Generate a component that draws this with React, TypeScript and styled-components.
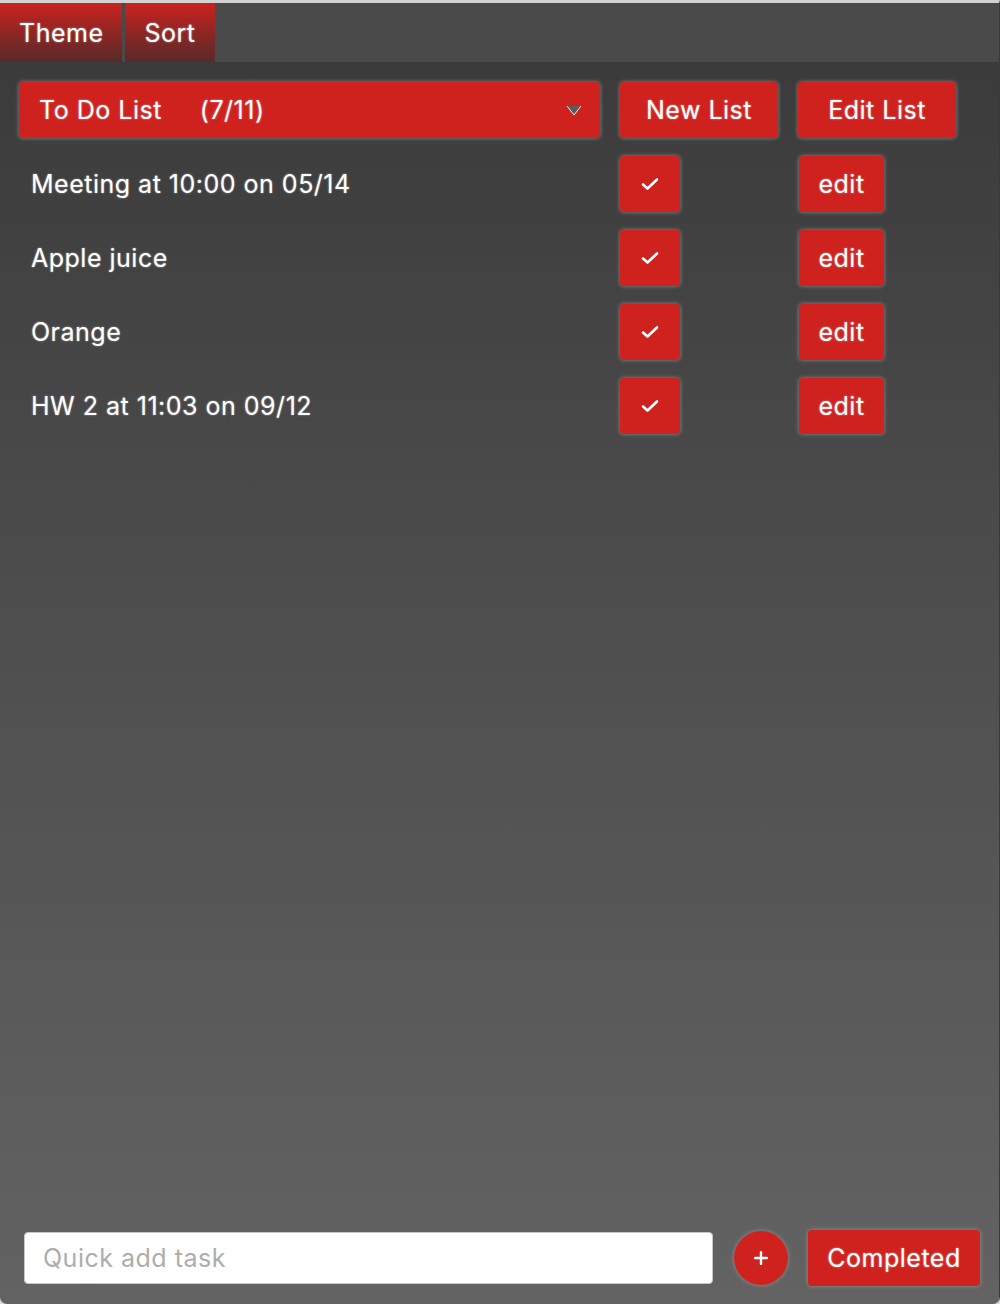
import React from "react";
import styled, { createGlobalStyle } from "styled-components";

const Global = createGlobalStyle`
  html, body { margin: 0; padding: 0; background: #d8d8d8; }
  body { font-family: "Inter", "Roboto", "Liberation Sans", sans-serif; }
  * { box-sizing: border-box; }
`;

const RED = "#cf221e";

const Window = styled.div`
  width: 1000px;
  height: 1304px;
  display: flex;
  flex-direction: column;
  border-top: 3px solid #d2d2d2;
  border-right: 1px solid #3a3a3a;
  border-radius: 0 0 7px 7px;
  overflow: hidden;
  font-size: 25px;
  letter-spacing: 0.5px;
`;

const TopBar = styled.div`
  height: 59px;
  background: #4a4a4a;
  display: flex;
  gap: 3px;
`;

const Tab = styled.div`
  height: 100%;
  padding: 0 19px;
  display: flex;
  align-items: center;
  color: #fff;
  text-shadow: 0 0 2px rgba(255, 255, 255, 0.6);
  background: linear-gradient(to bottom, #cc221e 0%, #8e2624 50%, #572b2a 100%);
`;

const Body = styled.div`
  flex: 1;
  display: flex;
  flex-direction: column;
  padding: 20px 0 18px 0;
  background: linear-gradient(to bottom, #3b3b3b 0%, #4c4c4c 40%, #636363 100%);
`;

const Grid = styled.div`
  display: grid;
  grid-template-columns: 581px 158px 158px;
  column-gap: 20px;
  row-gap: 18px;
  grid-auto-rows: 56px;
  padding-left: 19px;
  align-items: center;
  justify-items: start;
`;

const RedBox = styled.button`
  border: none;
  background: ${RED};
  color: #fff;
  border-radius: 4px;
  box-shadow: 0 0 4px rgba(170, 170, 170, 0.7);
  font-family: inherit;
  font-size: inherit;
  letter-spacing: inherit;
  text-shadow: 0 0 2px rgba(255, 255, 255, 0.55);
  display: flex;
  align-items: center;
  justify-content: center;
  padding: 0;
  height: 56px;
`;

const Select = styled(RedBox)`
  width: 581px;
  justify-content: space-between;
  padding: 0 18px 0 20px;
`;

const SelectLabel = styled.span`
  display: flex;
  gap: 38px;
`;

const WideButton = styled(RedBox)`
  width: 158px;
`;

const CheckButton = styled(RedBox)`
  width: 60px;
`;

const EditButton = styled(RedBox)`
  width: 85px;
  margin-left: 1px;
`;

const TaskText = styled.div`
  color: #fff;
  padding-left: 12px;
  text-shadow: 0 0 2px rgba(255, 255, 255, 0.55);
`;

const Spacer = styled.div`
  flex: 1;
`;

const Footer = styled.div`
  display: flex;
  align-items: center;
  padding-left: 24px;
`;

const Input = styled.input`
  width: 689px;
  height: 52px;
  border: 1px solid #c8c8c8;
  border-radius: 4px;
  background: #fff;
  padding: 0 18px;
  font-family: inherit;
  font-size: inherit;
  letter-spacing: inherit;
  color: #333;
  outline: none;
  &::placeholder { color: #adadad; }
`;

const RoundButton = styled(RedBox)`
  width: 54px;
  height: 54px;
  border-radius: 50%;
  margin-left: 21px;
`;

const CompletedButton = styled(RedBox)`
  width: 172px;
  margin-left: 20px;
`;

const Check = () => (
  <svg width="18" height="14" viewBox="0 0 18 14">
    <path d="M2 7.5 L6.5 11.5 L16 2.5" fill="none" stroke="#fff" strokeWidth="2.6" strokeLinecap="round" strokeLinejoin="round" />
  </svg>
);

const Arrow = () => (
  <svg width="16" height="11" viewBox="0 0 16 11">
    <path d="M1 1 L15 1 L8 10 Z" fill="#5a5a5a" />
    <path d="M1 1 L8 10 L15 1" fill="none" stroke="#fff" strokeWidth="1" opacity="0.9" />
  </svg>
);

const Plus = () => (
  <svg width="14" height="14" viewBox="0 0 14 14">
    <path d="M7 1 V13 M1 7 H13" stroke="#fff" strokeWidth="2.4" strokeLinecap="round" />
  </svg>
);

const tasks = [
  "Meeting at 10:00 on 05/14",
  "Apple juice",
  "Orange",
  "HW 2 at 11:03 on 09/12",
];

export default function App() {
  return (
    <>
      <Global />
      <Window>
        <TopBar>
          <Tab>Theme</Tab>
          <Tab>Sort</Tab>
        </TopBar>
        <Body>
          <Grid>
            <Select>
              <SelectLabel>
                <span>To Do List</span>
                <span>(7/11)</span>
              </SelectLabel>
              <Arrow />
            </Select>
            <WideButton>New List</WideButton>
            <WideButton>Edit List</WideButton>
            {tasks.map((t) => (
              <React.Fragment key={t}>
                <TaskText>{t}</TaskText>
                <CheckButton aria-label="done">
                  <Check />
                </CheckButton>
                <EditButton>edit</EditButton>
              </React.Fragment>
            ))}
          </Grid>
          <Spacer />
          <Footer>
            <Input placeholder="Quick add task" />
            <RoundButton aria-label="add">
              <Plus />
            </RoundButton>
            <CompletedButton>Completed</CompletedButton>
          </Footer>
        </Body>
      </Window>
    </>
  );
}
